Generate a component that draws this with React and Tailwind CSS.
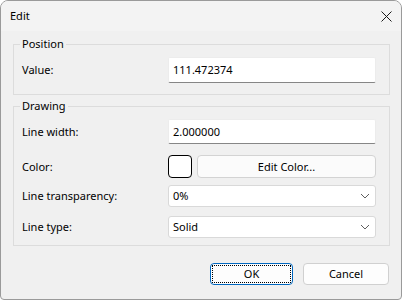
import React from "react";

const font = { fontFamily: '"Noto Sans", "Open Sans", sans-serif' };

function Chevron() {
  return (
    <svg width="10" height="6" viewBox="0 0 10 6" className="shrink-0">
      <path d="M1 1 L5 5 L9 1" fill="none" stroke="#5f5f5f" strokeWidth="1" />
    </svg>
  );
}

function TextBox({ value, h }) {
  return (
    <div className={`${h} bg-white border border-[#ececec] border-b-[#868686] rounded-[2px] flex items-center pl-[4px]`}>
      <span>{value}</span>
    </div>
  );
}

function Combo({ value }) {
  return (
    <div className="h-[22px] bg-white border border-[#d9d9d9] rounded-[3px] flex items-center justify-between pl-[4px] pr-[5px]">
      <span>{value}</span>
      <Chevron />
    </div>
  );
}

function Label({ children }) {
  return <div className="flex items-center text-black">{children}</div>;
}

export default function App() {
  return (
    <div className="w-[403px] h-[301px] bg-white text-[11px] leading-[16px] text-black" style={font}>
      <div className="w-[402px] h-[300px] border border-[#9a9a9a] rounded-t-[8px] rounded-b-[4px] overflow-hidden flex flex-col bg-[#f0f0f0]">
        {/* title bar */}
        <div className="h-[30px] bg-[#f3f3f3] flex items-center justify-between pl-[9px] pr-[9px] shrink-0">
          <span>Edit</span>
          <svg width="11" height="11" viewBox="0 0 11 11">
            <path d="M0.5 0.5 L10.5 10.5 M10.5 0.5 L0.5 10.5" stroke="#1a1a1a" strokeWidth="1" />
          </svg>
        </div>

        <div className="flex flex-col pl-[12px] pr-[11px] pt-[5px]">
          {/* Position */}
          <fieldset className="border border-[#dcdcdc] w-[377px]">
            <legend className="ml-[6px] px-[2px] leading-[16px]">Position</legend>
            <div className="grid grid-cols-[146px_208px] pl-[8px] pt-[5px] pb-[11px]">
              <Label>Value:</Label>
              <TextBox value="111.472374" h="h-[26px]" />
            </div>
          </fieldset>

          {/* Drawing */}
          <fieldset className="border border-[#dcdcdc] w-[377px] mt-[3px]">
            <legend className="ml-[6px] px-[2px] leading-[16px]">Drawing</legend>
            <div className="grid grid-cols-[146px_208px] pl-[8px] pt-[5px] pb-[7px]">
              <Label>Line width:</Label>
              <TextBox value="2.000000" h="h-[25px]" />

              <div className="h-[11px] col-span-2" />
              <Label>Color:</Label>
              <div className="flex gap-[5px] h-[23px]">
                <div className="w-[24px] h-[23px] border border-black rounded-[4px] bg-white" />
                <div className="flex-1 bg-[#fbfbfb] border border-[#d3d3d3] rounded-[4px] flex items-center justify-center">
                  Edit Color...
                </div>
              </div>

              <div className="h-[7px] col-span-2" />
              <Label>Line transparency:</Label>
              <Combo value="0%" />

              <div className="h-[9px] col-span-2" />
              <Label>Line type:</Label>
              <Combo value="Solid" />
            </div>
          </fieldset>

          {/* buttons */}
          <div className="flex justify-end gap-[10px] mt-[17px] pr-[1px]">
            <div className="w-[83px] h-[22px] rounded-[4px] border border-[#0067c0] bg-[#fdfdfd] p-[1px]">
              <div className="w-full h-full border border-dotted border-black flex items-center justify-center">
                OK
              </div>
            </div>
            <div className="w-[86px] h-[22px] rounded-[4px] border border-[#d0d0d0] bg-[#fdfdfd] flex items-center justify-center">
              Cancel
            </div>
          </div>
        </div>
      </div>
    </div>
  );
}
